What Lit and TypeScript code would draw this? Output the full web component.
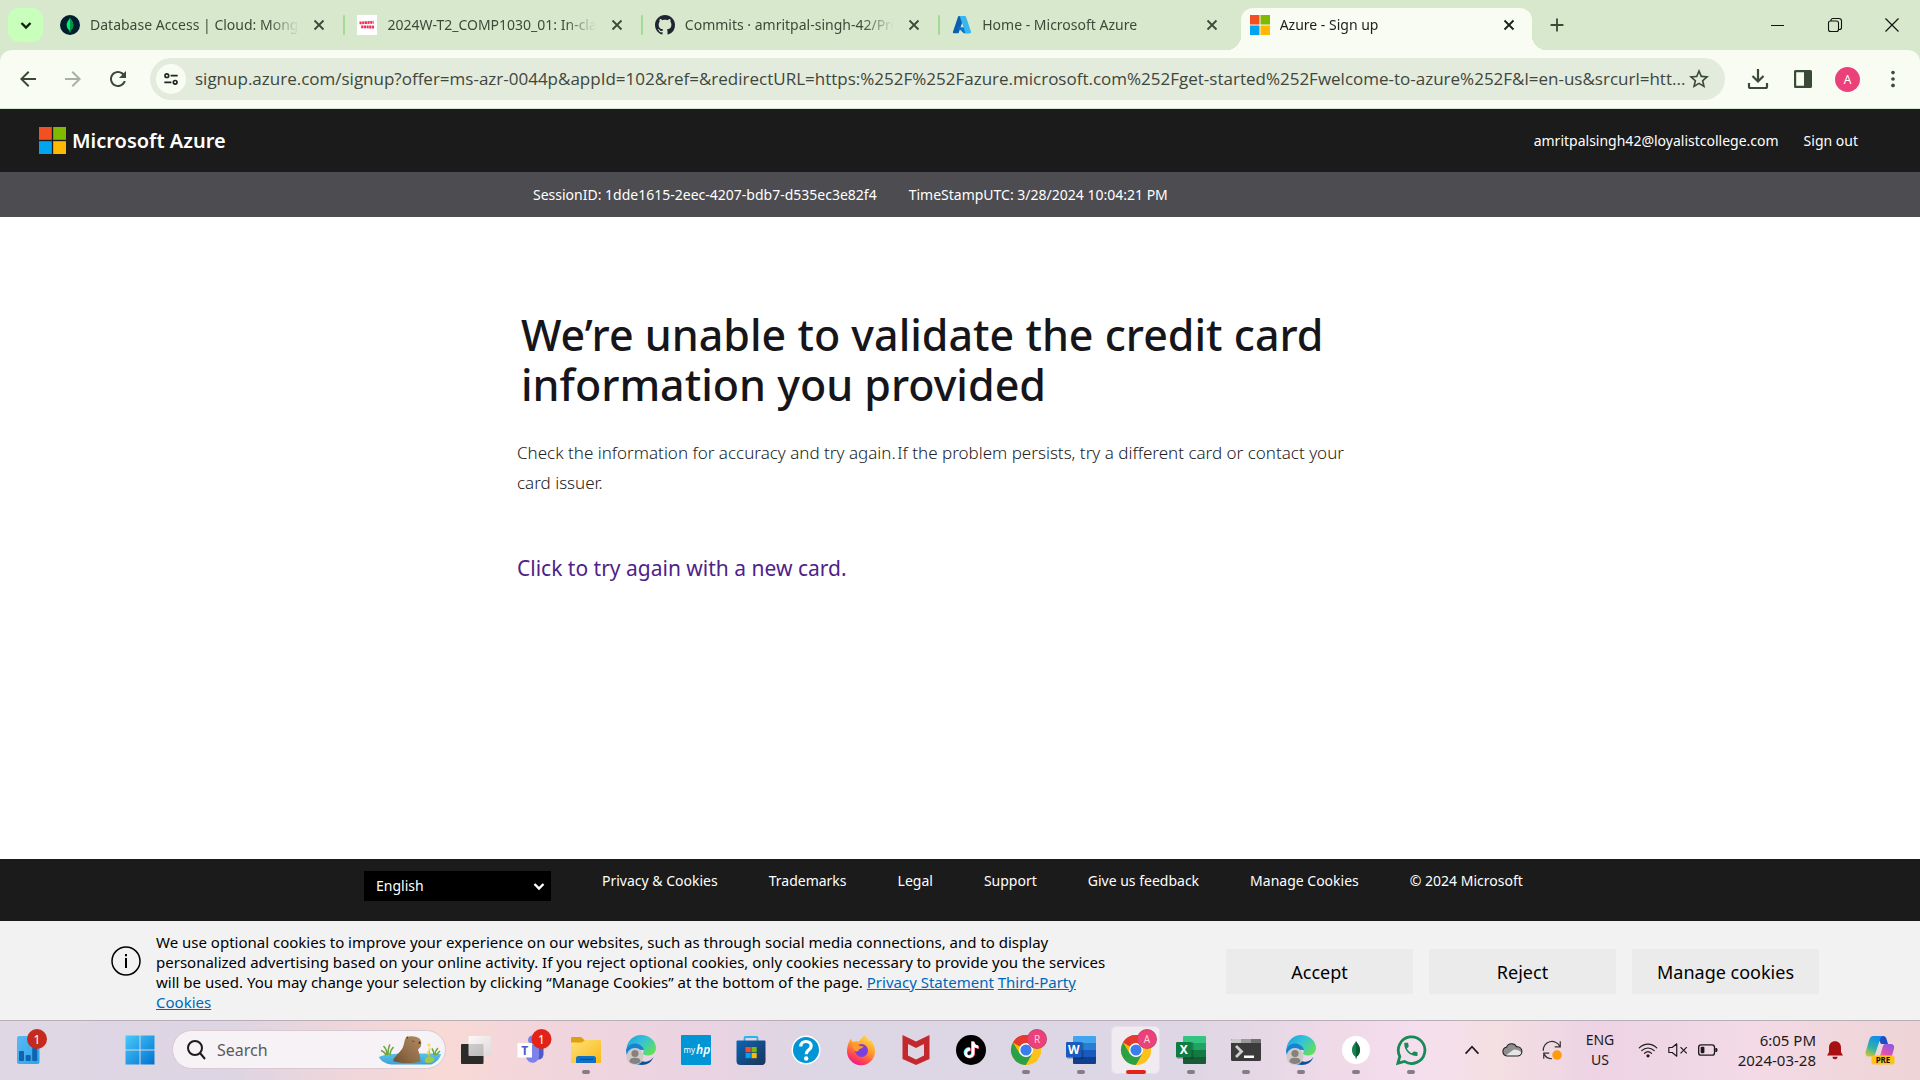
import { LitElement, html, svg, css, nothing, TemplateResult, SVGTemplateResult } from "lit";
import { customElement, property } from "lit/decorators.js";
import { classMap } from "lit/directives/class-map.js";

type Icon = SVGTemplateResult;

const base = css`
  :host {
    display: block;
    font-family: "Noto Sans", "Open Sans", sans-serif;
    font-size: 14px;
  }
  * {
    box-sizing: border-box;
  }
  svg {
    display: block;
    flex: none;
  }
  button,
  input,
  select {
    font: inherit;
    color: inherit;
    border: 0;
    margin: 0;
    padding: 0;
    background: none;
    outline: 0;
  }
  button {
    display: flex;
    align-items: center;
    justify-content: center;
    cursor: pointer;
  }
  a {
    color: inherit;
    text-decoration: none;
  }
`;

const draw = (shape: Icon, size = 24, box = "0 0 24 24", height = size) =>
  html`<svg width=${size} height=${height} viewBox=${box} fill="currentColor" aria-hidden="true">${shape}</svg>`;

/* ---------- glyphs ---------- */

const glyph = {
  back: svg`<path d="M20 11H7.83l5.59-5.59L12 4l-8 8 8 8 1.41-1.41L7.83 13H20v-2z"/>`,
  forward: svg`<path d="M12 4l-1.41 1.41L16.17 11H4v2h12.17l-5.58 5.59L12 20l8-8z"/>`,
  reload: svg`<path d="M17.65 6.35C16.2 4.9 14.21 4 12 4c-4.42 0-7.99 3.58-7.99 8s3.57 8 7.99 8c3.73 0 6.84-2.55 7.73-6h-2.08c-.82 2.33-3.04 4-5.65 4-3.31 0-6-2.69-6-6s2.69-6 6-6c1.66 0 3.14.69 4.22 1.78L13 11h7V4l-2.35 2.35z"/>`,
  star: svg`<path d="M22 9.24l-7.19-.62L12 2 9.19 8.63 2 9.24l5.46 4.73L5.82 21 12 17.27 18.18 21l-1.63-7.03L22 9.24zM12 15.4l-3.76 2.27 1-4.28-3.32-2.88 4.38-.38L12 6.1l1.71 4.04 4.38.38-3.32 2.88 1 4.28L12 15.4z"/>`,
  download: svg`<g fill="none" stroke="currentColor" stroke-width="2.200"><path d="M12 2v12M6.500 9l5.500 5.500L17.500 9"/><path d="M3 16v3.500a1.500 1.500 0 0 0 1.500 1.500h15a1.500 1.500 0 0 0 1.500-1.500V16"/></g>`,
  panel: svg`<path fill-rule="evenodd" d="M4.500 3h15A1.500 1.500 0 0 1 21 4.500v15a1.500 1.500 0 0 1-1.500 1.500h-15A1.500 1.500 0 0 1 3 19.500v-15A1.500 1.500 0 0 1 4.500 3zM5.200 5.200v13.600h7.800V5.200z"/>`,
  dots: svg`<circle cx="12" cy="5" r="2"/><circle cx="12" cy="12" r="2"/><circle cx="12" cy="19" r="2"/>`,
  tune: svg`<g fill="none" stroke="currentColor" stroke-width="2"><circle cx="7" cy="8" r="2.200"/><path d="M11.500 8H20M4 16h8.500"/><circle cx="17" cy="16" r="2.200"/></g>`,
  cross: svg`<path fill="none" stroke="currentColor" stroke-width="1.800" d="M7.500 7.500l9 9M16.500 7.500l-9 9"/>`,
  plus: svg`<path fill="none" stroke="currentColor" stroke-width="2" d="M12 5v14M5 12h14"/>`,
  caret: svg`<path fill="none" stroke="currentColor" stroke-width="2.400" d="M7.500 10l4.500 4.500L16.500 10"/>`,
  minimise: svg`<path fill="none" stroke="currentColor" stroke-width="1" d="M5 12.500h13"/>`,
  restore: svg`<g fill="none" stroke="currentColor" stroke-width="1.100"><rect x="5.500" y="8" width="10" height="10.500" rx="2"/><path d="M8 8V7.500a2 2 0 0 1 2-2h6a2.500 2.500 0 0 1 2.500 2.500v6.500a2 2 0 0 1-2 2h-1"/></g>`,
  close: svg`<path fill="none" stroke="currentColor" stroke-width="1.200" d="M5.500 5.500l13 13M18.500 5.500l-13 13"/>`,
};

const microsoft = svg`
  <path fill="#f25022" d="M0 0h11.400v11.400H0z"/><path fill="#7fba00" d="M12.600 0H24v11.400H12.600z"/>
  <path fill="#00a4ef" d="M0 12.600h11.400V24H0z"/><path fill="#ffb900" d="M12.600 12.600H24V24H12.600z"/>`;

const favicon = {
  mongo: svg`<circle cx="12" cy="12" r="12" fill="#001e2b"/><path fill="#00ed64" d="M12 3.500c.8 1.800 4 4.200 4 8.600 0 3.900-2.600 5.800-3.500 6.500L12.300 21h-.7l-.2-2.400C10.500 17.900 8 16 8 12.100c0-4.400 3.200-6.800 4-8.600z"/><path fill="#00924a" d="M12 3.500c.8 1.800 4 4.200 4 8.600 0 3.900-2.600 5.800-3.500 6.500L12 21z"/>`,
  loyalist: svg`<path fill="#fff" d="M0 0h24v24H0z"/><g fill="none" stroke="#f0315c" stroke-width="3.400"><path stroke-dasharray="2.600 .6" d="M3 9.500l17-.8"/><path stroke-dasharray="2.600 .6" d="M5 14.200l16 .3"/></g>`,
  github: svg`<path transform="scale(1.500)" fill="#1f2430" d="M8 0C3.580 0 0 3.580 0 8c0 3.540 2.290 6.530 5.470 7.590.4.070.55-.17.55-.38 0-.19-.01-.82-.01-1.490-2.010.37-2.530-.49-2.690-.94-.09-.23-.48-.94-.82-1.130-.28-.15-.68-.52-.01-.53.63-.01 1.080.58 1.230.82.72 1.210 1.870.87 2.330.66.07-.52.28-.87.51-1.070-1.780-.2-3.640-.89-3.640-3.950 0-.87.31-1.590.82-2.150-.08-.2-.36-1.020.08-2.120 0 0 .67-.21 2.200.82.64-.18 1.320-.27 2-.27.68 0 1.360.09 2 .27 1.530-1.040 2.200-.82 2.200-.82.44 1.100.16 1.920.08 2.120.51.56.82 1.270.82 2.150 0 3.070-1.870 3.750-3.650 3.950.29.25.54.73.54 1.480 0 1.070-.01 1.930-.01 2.200 0 .21.15.46.55.38A8.013 8.013 0 0016 8c0-4.420-3.580-8-8-8z"/>`,
  azure: svg`<g transform="translate(0 -.5) scale(.25)"><path fill="#0a5fb0" d="M33.340 6.540h26.040l-27.030 80.100a4.150 4.150 0 0 1-3.940 2.810H8.150a4.140 4.140 0 0 1-3.930-5.470L29.400 9.380a4.150 4.150 0 0 1 3.940-2.830z"/><path fill="#0078d4" d="M71.170 60.260H29.880a1.910 1.910 0 0 0-1.300 3.310l26.530 24.760a4.170 4.170 0 0 0 2.850 1.130h23.380z"/><path fill="#38b6f0" d="M66.600 9.360a4.140 4.140 0 0 0-3.930-2.820H33.650a4.150 4.150 0 0 1 3.930 2.820l25.180 74.620a4.150 4.150 0 0 1-3.930 5.480h29.020a4.150 4.150 0 0 0 3.930-5.480z"/></g>`,
  microsoft,
};

/* ---------- taskbar applications, each on a 30 x 30 grid ---------- */

const chrome = (letter: string) => svg`
  <circle cx="15" cy="15" r="15" fill="#fbbc05"/>
  <path fill="#e53a30" d="M15 15L2 7.500A15 15 0 0 1 28 7.500z"/>
  <path fill="#e53a30" d="M2 7.500A15 15 0 0 1 28 7.500l-13 .5z"/>
  <path fill="#2c9f47" d="M2 7.500A15 15 0 0 0 15 30l6.500-11.300L9 19z"/>
  <path fill="#fcc21b" d="M28 7.500A15 15 0 0 1 15 30l6.500-11.300V8z"/>
  <circle cx="15" cy="15" r="7" fill="#fff"/><circle cx="15" cy="15" r="5.600" fill="#3b7ded"/>
  <circle cx="26" cy="4" r="10" fill="#b5456a"/><circle cx="26" cy="4" r="9.300" fill="#ec407a"/>
  <text x="26" y="7.500" text-anchor="middle" font-size="10" fill="#fbd5e1">${letter}</text>`;

const edge = svg`
  <defs>
    <linearGradient id="edge-top" x1="0" y1="0" x2="1" y2=".7"><stop offset="0" stop-color="#1c9fe0"/><stop offset=".5" stop-color="#35c2d8"/><stop offset="1" stop-color="#62e05a"/></linearGradient>
  </defs>
  <path fill="url(#edge-top)" d="M.5 13.500C1.500 5.500 7.500 0 15 0c8.500 0 15 6 15 13 0 5-4 7.500-8 7.500-3.500 0-5.300-1.200-5-2.200 1.500-2 1.200-5-1-6.800C12 8.500 4 9 .5 13.500z"/>
  <path fill="#1583cf" d="M0 15C1.500 10 7 7.500 12 9c4 1.200 6 4 6 6.500-5-2.500-9 2-8 6.500.8 4 4 7 7 7.900C7 31 0 23.500 0 15z"/>
  <path fill="#0f4f96" d="M10 20c.5 5 6 7.500 11 6.500 3-.6 5-2.300 6.500-4.500C26 27 21 30 16 30c-4-.8-7-5-6-10z"/>
  <circle cx="9" cy="21.500" r="8.500" fill="#cfcac8"/><circle cx="9" cy="18.500" r="3.600" fill="#86807e"/><path fill="#86807e" d="M3.500 27c0-3.500 2-4.300 5.500-4.300s5.500.8 5.500 4.300a8.500 8.500 0 0 1-11 0z"/>`;

const office = (letter: string, shades: string[], tile: string) => svg`
  <path fill=${shades[0]} d="M8 1h21a1 1 0 0 1 1 1v6H7V2a1 1 0 0 1 1-1z"/>
  <path fill=${shades[1]} d="M7 8h23v7H7z"/><path fill=${shades[2]} d="M7 15h23v7H7z"/>
  <path fill=${shades[3]} d="M7 22h23v6a1 1 0 0 1-1 1H8a1 1 0 0 1-1-1z"/>
  <rect x="1" y="7" width="16.500" height="17" rx="1" fill="#000" opacity=".2"/>
  <rect y="7" width="15.500" height="15.500" rx="1.200" fill=${tile}/>
  <text x="7.700" y="19" text-anchor="middle" font-size="12" font-weight="700" fill="#fff">${letter}</text>`;

interface App {
  name: string;
  art: Icon;
  running?: boolean;
  active?: boolean;
}

const apps: App[] = [
  {
    name: "Task View",
    art: svg`<defs><linearGradient id="tv" x1="0" y1="0" x2="1" y2="1"><stop offset="0" stop-color="#fff"/><stop offset="1" stop-color="#d9d9d9"/></linearGradient></defs>
      <rect y="9" width="22.500" height="20" rx="1" fill="#2b2b29"/><rect x="7.500" y="1" width="22.500" height="20" rx="1" fill="url(#tv)" opacity=".8"/>`,
  },
  {
    name: "Microsoft Teams",
    art: svg`<circle cx="16.500" cy="5" r="4.500" fill="#7b83eb"/><path fill="#5059c9" d="M19 9h8.500v11a5 5 0 0 1-8.500 3z"/>
      <path fill="#7b83eb" d="M9 10h14v10.500a6.500 6.500 0 0 1-13 1.500z"/><rect x="1.500" y="8" width="14.500" height="14.500" rx=".6" fill="#fff"/>
      <text x="8.800" y="19.500" text-anchor="middle" font-size="12" font-weight="700" fill="#5059c9">T</text>
      <circle cx="25.500" cy="4" r="10" fill="#e2231a"/><text x="25.500" y="8.500" text-anchor="middle" font-size="12" fill="#fff">1</text>`,
  },
  {
    name: "File Explorer",
    running: true,
    art: svg`<defs><linearGradient id="fe" x1="0" y1="0" x2="1" y2="1"><stop offset="0" stop-color="#ffe07a"/><stop offset="1" stop-color="#f9b915"/></linearGradient></defs>
      <path fill="#dfa00f" d="M0 3a1 1 0 0 1 1-1h9l3.500 3H29v6H0z"/><path fill="url(#fe)" d="M0 7.500h11L14 5h15a1 1 0 0 1 1 1v21a1 1 0 0 1-1 1H1a1 1 0 0 1-1-1z"/>
      <path fill="#0f72c9" d="M5 28v-4.500A2.500 2.500 0 0 1 7.500 21h15a2.500 2.500 0 0 1 2.500 2.500V28z"/><path fill="#0a4c92" d="M9 23.800h13v1.200H9z"/>`,
  },
  { name: "Microsoft Edge", art: edge },
  {
    name: "myHP",
    art: svg`<rect width="30" height="30" rx="1" fill="#0096d6"/><text x="2.500" y="17.500" font-size="8" fill="#fff">my</text>
      <text x="15" y="19" font-size="12" font-style="italic" font-weight="600" fill="#fff">hp</text>`,
  },
  {
    name: "Microsoft Store",
    art: svg`<defs><linearGradient id="ms" x1="0" y1="0" x2="1" y2="1"><stop offset="0" stop-color="#0c64b5"/><stop offset="1" stop-color="#1c3358"/></linearGradient></defs>
      <path fill="none" stroke="#27b5f0" stroke-width="1.800" d="M8.500 7V3.200A1.200 1.200 0 0 1 9.700 2h10.600a1.200 1.200 0 0 1 1.200 1.200V7"/>
      <path fill="url(#ms)" d="M.5 6.500a1 1 0 0 1 1-1h27a1 1 0 0 1 1 1V26a4 4 0 0 1-4 4h-21a4 4 0 0 1-4-4z"/>
      <path fill="#f25022" d="M9.500 12h5.200v5.200H9.500z"/><path fill="#7fba00" d="M15.500 12h5.200v5.200h-5.200z"/><path fill="#00a4ef" d="M9.500 18h5.200v5.200H9.500z"/><path fill="#ffb900" d="M15.500 18h5.200v5.200h-5.200z"/>`,
  },
  {
    name: "Help",
    art: svg`<circle cx="15" cy="15" r="14.500" fill="#fff"/><circle cx="15" cy="15" r="13" fill="#0096d6"/>
      <path fill="none" stroke="#fff" stroke-width="3.200" d="M9.800 11.500c0-3.200 2.300-5 5.200-5s5.200 1.700 5.200 4.500c0 3.800-5 3.800-5 8.200"/><circle cx="15.200" cy="23.500" r="2.200" fill="#fff"/>`,
  },
  {
    name: "Firefox",
    art: svg`<defs><linearGradient id="ff" x1=".8" y1="0" x2=".3" y2="1"><stop offset="0" stop-color="#ffe14a"/><stop offset=".45" stop-color="#ff9a2a"/><stop offset=".75" stop-color="#ff4a4f"/><stop offset="1" stop-color="#f0128a"/></linearGradient></defs>
      <path fill="url(#ff)" d="M18 0c3 2 4 4.500 5 6 1-.2 1.500-1 1.500-1 2.500 3 4.500 6.500 4.500 11a14 14 0 0 1-28 .5C1 12 2 8 5 3.500c.3 1.800 1 2.800 2 3.500 2-.8 4-.8 5.500-.5C14.500 5 16.500 2.500 18 0z"/>
      <circle cx="15.500" cy="15.500" r="6.500" fill="#7a3fe0"/><path fill="#ff9a2a" d="M6.500 10c2.500-1.500 5.500-.5 7 .8 1.500.7 3 .3 4 .7-.6 1.800-3 2-4 2.500-1 1-1 2.300-2.500 2.500C8 16 6.500 13 6.500 10z"/>`,
  },
  {
    name: "McAfee",
    art: svg`<path fill="#c5282c" fill-rule="evenodd" d="M1.500 0L15 6.500 28.500 0v24L15 30 1.500 24zM7 9v11.500l8 4 8-4V9l-8 4z"/>`,
  },
  {
    name: "TikTok",
    art: svg`<circle cx="15" cy="15" r="15" fill="#000"/>${[
      ["#25f4ee", 6.6, 6.2],
      ["#fe2c55", 7.8, 7.2],
      ["#ffffff", 7.2, 6.7],
    ].map(
      ([c, x, y]) => svg`<path transform="translate(${x} ${y}) scale(.68)" fill=${c} d="M12.525.02c1.310-.02 2.610-.01 3.910-.02.08 1.530.63 3.090 1.750 4.170 1.120 1.110 2.700 1.620 4.240 1.790v4.030c-1.440-.05-2.890-.35-4.200-.97-.57-.26-1.100-.59-1.620-.93-.01 2.920.01 5.840-.02 8.750-.08 1.400-.54 2.790-1.350 3.940-1.310 1.920-3.580 3.170-5.910 3.210-1.430.08-2.860-.31-4.080-1.030-2.020-1.190-3.440-3.370-3.650-5.710-.02-.5-.03-1-.01-1.490.18-1.900 1.120-3.720 2.580-4.960 1.660-1.440 3.980-2.130 6.150-1.720.02 1.480-.04 2.960-.04 4.440-.99-.32-2.150-.23-3.020.37-.63.41-1.110 1.040-1.360 1.750-.21.51-.15 1.070-.14 1.610.24 1.640 1.820 3.020 3.500 2.870 1.120-.01 2.190-.66 2.770-1.610.19-.33.4-.67.41-1.060.1-1.790.06-3.570.07-5.360.01-4.030-.01-8.050.02-12.070z"/>`,
    )}`,
  },
  { name: "Chrome profile R", art: chrome("R"), running: true },
  { name: "Word", art: office("W", ["#41a5ee", "#2b7cd3", "#185abd", "#103f91"], "#185abd"), running: true },
  { name: "Chrome profile A", art: chrome("A"), running: true, active: true },
  { name: "Excel", art: office("X", ["#33c481", "#21a366", "#107c41", "#185c37"], "#107c41"), running: true },
  {
    name: "Terminal",
    running: true,
    art: svg`<rect y="4" width="30" height="22" rx="1.500" fill="#3b3b3b"/><path fill="#c9c9c9" d="M1.500 4H10v4H0V5.500A1.500 1.500 0 0 1 1.500 4z"/><path fill="#9a9a9a" d="M10 4h10v4H10z"/><path fill="#707070" d="M20 4h8.500A1.500 1.500 0 0 1 30 5.500V8H20z"/>
      <path fill="none" stroke="#cfcfcf" stroke-width="2.800" d="M5 11l5.500 5.500L5 22"/><path fill="#fff" d="M13 20.500h10V23H13z"/>`,
  },
  { name: "Microsoft Edge profile", art: edge, running: true },
  {
    name: "MongoDB Compass",
    running: true,
    art: svg`<circle cx="15" cy="15" r="14" fill="#fff"/><path fill="#10834f" d="M15 6c1 2.500 4 4.500 4 9 0 4-2.500 6-3.500 7l-.3 2h-.4l-.3-2C13.500 21 11 19 11 15c0-4.500 3-6.500 4-9z"/><path fill="#0a5c38" d="M15 6c1 2.500 4 4.500 4 9 0 4-2.500 6-3.500 7l-.3 2H15z"/>`,
  },
  {
    name: "WhatsApp",
    running: true,
    art: svg`<path fill="none" stroke="#178a55" stroke-width="2.800" d="M1.900 28.200l1.900-6.900A13.300 13.300 0 1 1 8.500 26.400z"/>
      <path transform="translate(6 5.500) scale(.74)" fill="#178a55" d="M6.620 10.790c1.440 2.830 3.760 5.140 6.590 6.590l2.200-2.200c.27-.27.67-.36 1.020-.24 1.120.37 2.330.57 3.570.57.55 0 1 .45 1 1V20c0 .55-.45 1-1 1-9.390 0-17-7.610-17-17 0-.55.45-1 1-1h3.500c.55 0 1 .45 1 1 0 1.250.2 2.450.57 3.570.11.35.03.74-.25 1.020l-2.200 2.200z"/>`,
  },
];

/* ---------- browser chrome ---------- */

const tabs = [
  { icon: favicon.mongo, title: "Database Access | Cloud: MongoDB" },
  { icon: favicon.loyalist, title: "2024W-T2_COMP1030_01: In-class" },
  { icon: favicon.github, title: "Commits · amritpal-singh-42/Project" },
  { icon: favicon.azure, title: "Home - Microsoft Azure" },
  { icon: favicon.microsoft, title: "Azure - Sign up", active: true },
];

@customElement("browser-tabs")
export class BrowserTabs extends LitElement {
  static styles = [
    base,
    css`
      .strip {
        display: flex;
        height: 50px;
        background: #d8e8cd;
        color: #3c4a38;
      }
      .search {
        width: 35px;
        height: 34px;
        margin: 8px 5px 0 8px;
        border-radius: 11px;
        background: #c8ffbb;
        color: #10200c;
      }
      .tabs {
        display: flex;
        flex: 0 1 1487px;
        min-width: 0;
      }
      .tab {
        position: relative;
        display: flex;
        align-items: center;
        flex: 1 1 0;
        min-width: 0;
        padding: 0 14px 0 12px;
      }
      .tab.ruled::after {
        content: "";
        position: absolute;
        right: 0;
        top: 15px;
        width: 2px;
        height: 20px;
        border-radius: 1px;
        background: #a3da95;
      }
      .tab.active {
        color: #1b2118;
      }
      .tab.active .shape {
        position: absolute;
        inset: 8px 3px 0;
        border-radius: 12px 12px 0 0;
        background: #f8fcf2;
      }
      .shape::before,
      .shape::after {
        content: "";
        position: absolute;
        bottom: 0;
        width: 14px;
        height: 14px;
      }
      .shape::before {
        right: 100%;
        background: radial-gradient(circle at 0 0, transparent 14px, #f8fcf2 14px);
      }
      .shape::after {
        left: 100%;
        background: radial-gradient(circle at 100% 0, transparent 14px, #f8fcf2 14px);
      }
      .label {
        position: relative;
        flex: 1;
        min-width: 0;
        justify-content: flex-start;
        gap: 10px;
      }
      .title {
        flex: 0 1 209px;
        min-width: 0;
        overflow: hidden;
        white-space: nowrap;
        text-align: left;
        line-height: 20px;
        mask-image: linear-gradient(90deg, #000 85%, transparent);
      }
      .shut {
        position: relative;
        width: 24px;
        height: 24px;
      }
      .new {
        width: 44px;
      }
      .window {
        display: flex;
        margin-left: auto;
        color: #10130f;
      }
      .window button {
        width: 57px;
      }
    `,
  ];
  render() {
    return html`<div class="strip">
      <button class="search" aria-label="Search tabs">${draw(glyph.caret)}</button>
      <div class="tabs">
        ${tabs.map(
          (t, i) => html`<div class=${classMap({ tab: true, active: !!t.active, ruled: i < 3 })}>
            ${t.active ? html`<span class="shape"></span>` : nothing}
            <button class="label">${draw(t.icon, 20)}<span class="title">${t.title}</span></button>
            <button class="shut" aria-label="Close tab">${draw(glyph.cross)}</button>
          </div>`,
        )}
      </div>
      <button class="new" aria-label="New tab">${draw(glyph.plus, 22)}</button>
      <div class="window">
        <button aria-label="Minimise">${draw(glyph.minimise)}</button>
        <button aria-label="Restore">${draw(glyph.restore)}</button>
        <button aria-label="Close window">${draw(glyph.close)}</button>
      </div>
    </div>`;
  }
}

const address =
  "signup.azure.com/signup?offer=ms-azr-0044p&appId=102&ref=&redirectURL=https:%252F%252Fazure.microsoft.com%252Fget-started%252Fwelcome-to-azure%252F&l=en-us&srcurl=htt...";

@customElement("browser-toolbar")
export class BrowserToolbar extends LitElement {
  static styles = [
    base,
    css`
      :host {
        background: #d8e8cd;
      }
      .bar {
        display: flex;
        align-items: center;
        height: 59px;
        padding: 0 5px;
        border-bottom: 1px solid #d5e5d0;
        border-radius: 12px 12px 0 0;
        background: #f8fcf2;
        color: #3a4a36;
      }
      .bar > button {
        width: 45px;
        height: 40px;
      }
      .bar > .off {
        color: #a9b0a4;
      }
      .box {
        display: flex;
        align-items: center;
        flex: 1;
        min-width: 0;
        height: 42px;
        margin: 0 10px;
        padding: 0 14px 0 6px;
        border-radius: 21px;
        background: #e3ebdc;
      }
      .site {
        width: 30px;
        height: 30px;
        border-radius: 15px;
        background: #f8fcf2;
        color: #1f261c;
      }
      .box input {
        flex: 1;
        min-width: 0;
        margin-left: 9px;
        font-family: "Open Sans", sans-serif;
        font-size: 17px;
        line-height: 24px;
        color: #3f463d;
      }
      .avatar {
        display: grid;
        place-items: center;
        width: 25px;
        height: 25px;
        border-radius: 50%;
        background: #ec407a;
        color: #fff;
        font-size: 12px;
      }
    `,
  ];
  render() {
    return html`<div class="bar">
      <button aria-label="Back">${draw(glyph.back)}</button>
      <button class="off" aria-label="Forward">${draw(glyph.forward)}</button>
      <button aria-label="Reload">${draw(glyph.reload)}</button>
      <div class="box">
        <button class="site" aria-label="Site information">${draw(glyph.tune, 20)}</button>
        <input type="text" aria-label="Address" .value=${address} />
        <button aria-label="Bookmark this page">${draw(glyph.star)}</button>
      </div>
      <button aria-label="Downloads">${draw(glyph.download)}</button>
      <button aria-label="Side panel">${draw(glyph.panel)}</button>
      <button aria-label="Profile"><span class="avatar">A</span></button>
      <button aria-label="Menu">${draw(glyph.dots, 22)}</button>
    </div>`;
  }
}

/* ---------- page ---------- */

@customElement("azure-page")
export class AzurePage extends LitElement {
  static styles = [
    base,
    css`
      :host {
        display: flex;
        flex-direction: column;
        background: #fff;
      }
      header {
        display: flex;
        align-items: center;
        justify-content: space-between;
        height: 63px;
        padding: 0 62px 0 39px;
        background: #1b1b1b;
        color: #fff;
      }
      .brand {
        display: flex;
        align-items: center;
        gap: 6px;
        font-size: 20px;
        font-weight: 600;
        line-height: 26px;
      }
      .account {
        display: flex;
        gap: 25px;
        line-height: 20px;
      }
      .session {
        background: #4d4c51;
        color: #fff;
      }
      .column {
        width: 100%;
        max-width: 886px;
        margin: 0 auto;
      }
      .session .column {
        display: flex;
        align-items: center;
        gap: 32px;
        height: 45px;
        padding-left: 16px;
      }
      main {
        flex: 1;
        padding: 93px 0 60px;
      }
      h1 {
        margin: 0 0 28px;
        padding-left: 4px;
        font-size: 43px;
        font-weight: 500;
        line-height: 50px;
        color: #16161a;
      }
      .advice {
        margin: 0;
        max-width: 850px;
        font-size: 17px;
        font-weight: 300;
        line-height: 30px;
        color: #222;
      }
      .retry {
        display: inline-block;
        margin-top: 54px;
        font-size: 21px;
        line-height: 32px;
        color: #4f2289;
      }
      footer {
        background: #1b1b1b;
        color: #fff;
      }
      .links {
        display: flex;
        gap: 51px;
        max-width: 1192px;
        height: 62px;
        margin: 0 auto;
        padding-top: 12px;
        line-height: 20px;
      }
      .language {
        display: grid;
        align-items: center;
        width: 187px;
        height: 30px;
        background: #000;
      }
      .language > * {
        grid-area: 1 / 1;
      }
      .language select {
        appearance: none;
        width: 100%;
        height: 30px;
        padding: 0 30px 0 12px;
      }
      .language option {
        background: #000;
      }
      .language svg {
        justify-self: end;
        pointer-events: none;
      }
      .cookies {
        display: flex;
        align-items: center;
        gap: 15px;
        min-height: 99px;
        padding: 10px 101px 8px 111px;
        background: #f2f2f2;
        color: #000;
      }
      .info {
        align-self: flex-start;
        margin-top: 15px;
      }
      .notice {
        flex: 0 1 966px;
        margin: 0;
        font-size: 15px;
        line-height: 20px;
      }
      .notice a {
        color: #0067b8;
        text-decoration: underline;
      }
      .choices {
        display: flex;
        gap: 16px;
        margin-left: auto;
      }
      .choices button {
        width: 187px;
        height: 45px;
        background: #ebebeb;
        font-size: 18px;
        white-space: nowrap;
      }
    `,
  ];
  render() {
    const links = ["Privacy & Cookies", "Trademarks", "Legal", "Support", "Give us feedback", "Manage Cookies"];
    return html`
      <header>
        <a class="brand" href="#">${draw(microsoft, 27)}<span>Microsoft Azure</span></a>
        <nav class="account"><a href="#">amritpalsingh42@loyalistcollege.com</a><a href="#">Sign out</a></nav>
      </header>
      <div class="session">
        <div class="column">
          <span>SessionID: 1dde1615-2eec-4207-bdb7-d535ec3e82f4</span>
          <span>TimeStampUTC: 3/28/2024 10:04:21 PM</span>
        </div>
      </div>
      <main>
        <div class="column">
          <h1>We’re unable to validate the credit card information you provided</h1>
          <p class="advice">
            Check the information for accuracy and try again.&#8202;If the problem persists, try a different card or contact your card issuer.
          </p>
          <a class="retry" href="#">Click to try again with a new card.</a>
        </div>
      </main>
      <footer>
        <div class="links">
          <div class="language">
            <select aria-label="Language"><option>English</option></select>
            ${draw(glyph.caret, 24)}
          </div>
          ${links.map((l) => html`<a href="#">${l}</a>`)}
          <span>© 2024 Microsoft</span>
        </div>
      </footer>
      <section class="cookies" aria-label="Cookie notice">
        <svg class="info" width="30" height="30" viewBox="0 0 30 30" aria-hidden="true">
          <circle cx="15" cy="15" r="14" fill="none" stroke="#000" stroke-width="1.500" />
          <path d="M14 12h2v10h-2zM14 8h2v2.200h-2z" />
        </svg>
        <p class="notice">
          We use optional cookies to improve your experience on our websites, such as through social media connections, and to display
          personalized advertising based on your online activity. If you reject optional cookies, only cookies necessary to provide you
          the services will be used. You may change your selection by clicking “Manage Cookies” at the bottom of the page.
          <a href="#">Privacy Statement</a> <a href="#">Third-Party Cookies</a>
        </p>
        <div class="choices">
          <button>Accept</button><button>Reject</button><button>Manage cookies</button>
        </div>
      </section>
    `;
  }
}

/* ---------- taskbar ---------- */

const widget = svg`<defs><linearGradient id="wg" x1="0" y1="0" x2="1" y2="1"><stop offset="0" stop-color="#5bb8f2"/><stop offset="1" stop-color="#2aa5ea"/></linearGradient></defs>
  <rect y="7" width="22.500" height="28" rx="2" fill="url(#wg)"/><g fill="#0f63b0"><rect x="2" y="22" width="5" height="10" rx="1"/><rect x="8.700" y="26" width="5" height="6" rx="1"/><rect x="15.200" y="18" width="5" height="14" rx="1"/></g>
  <circle cx="20" cy="10" r="10" fill="#c42b1c"/><text x="20" y="14.500" text-anchor="middle" font-size="12" fill="#fff">1</text>`;

const start = svg`<defs><linearGradient id="st" gradientUnits="userSpaceOnUse" x1="0" y1="0" x2="30" y2="30"><stop offset="0" stop-color="#48ccfb"/><stop offset="1" stop-color="#0070d0"/></linearGradient></defs>
  <path fill="url(#st)" d="M.5.5h14v14H.5zM15.500.5h14v14h-14zM.5 15.500h14v14H.5zM15.500 15.500h14v14h-14z"/>`;

const capybara = svg`<defs>
    <linearGradient id="fur" x1="1" y1="0" x2="0" y2="1"><stop offset="0" stop-color="#b08a63"/><stop offset=".6" stop-color="#8f6a45"/><stop offset="1" stop-color="#6f4d30"/></linearGradient>
    <linearGradient id="pond" x1="0" y1="0" x2="0" y2="1"><stop offset="0" stop-color="#58c4e6"/><stop offset="1" stop-color="#3aa0d8"/></linearGradient>
  </defs>
  <path fill="url(#pond)" d="M0 22c4-2.500 14-3.500 26-3.500s30-.5 36 .5c-1 5-5 8.500-10 10.500H12C6 28.500 1 25.500 0 22z"/>
  <g fill="none" stroke="#6da53a" stroke-width="1.500"><path d="M8 20c0-4-1.500-7-3.500-9M9 20c0-5 .5-8 2-10.500M11 20c0-4 1.500-6 3.500-8M7 20c-1-2-3-4-5-4.500"/><path d="M55 20c0-3-1-5-2-6.500M56 20c0-3 1-5 3-7M57 20l4-4"/></g>
  <path fill="url(#fur)" d="M14 26c1-4.500 6-7.500 9-12 2.500-4 2-8.500 4-11.500.8-1.500 2-1.500 2.800-.8C33 .8 37 1.300 40.500 3.500c2 2 2.200 6 1 8.500-.8 1.300-2 1.700-2.500 2.500 1.200 3.500 2.500 8 2.500 12-8 2-19.500 2.300-27.500-.5z"/>
  <path fill="#4d3220" d="M33.500 5.500l2 .8-1.800.6zM40 6.500l1.800.5-.8 2-1.600-.5zM27.500 2.500l1.600-.6-.3 2.100z"/>
  <path fill="#a3c74a" d="M46 27c-1-3 1-5 3-5 0-3 .5-6 1-9 1 3 1.500 6 1.500 9 2-1 4 1 4 3-1 3-7 4-9.500 2z"/><circle cx="50" cy="10" r="1.500" fill="#f6d85a"/><circle cx="51" cy="14" r="1.400" fill="#f6e28a"/><circle cx="49" cy="18" r="1.400" fill="#f6d85a"/>`;

const tray = {
  up: svg`<path fill="none" stroke="currentColor" stroke-width="1.800" d="M5 16l7-7.500 7 7.500"/>`,
  cloud: svg`<path fill="#8e8e8e" d="M6.500 18.500A4.800 4.800 0 0 1 6 9a6 6 0 0 1 11-.5 5 5 0 0 1 1.500 10z"/><path fill="#e6e6e6" d="M4.500 18.500L14 11.500c3 .3 6 .5 8 3a4 4 0 0 1-3.500 4z"/><path fill="none" stroke="#222" stroke-width="1.200" d="M6.500 18.500A4.800 4.800 0 0 1 6 9a6 6 0 0 1 11-.5 5 5 0 0 1 1.500 10z"/>`,
  sync: svg`<g fill="none" stroke="#333" stroke-width="1.300"><path d="M2.500 13A9.500 9.500 0 0 1 20.500 8M21 2.500V8.500h-6"/><path d="M12 21.500a9 9 0 0 1-8.500-5M3 21.500v-6h6"/></g><circle cx="17.500" cy="17.500" r="5.200" fill="#ff9a0a"/>`,
  wifi: svg`<g fill="none" stroke="currentColor" stroke-width="1.400" stroke-linecap="round"><path d="M1.500 9.500c6-6 15-6 21 0M4.500 12.800c4.500-4.300 10.500-4.300 15 0M7.700 16c2.500-2.500 6-2.500 8.600 0"/></g><circle cx="12" cy="19" r="1.900"/>`,
  mute: svg`<g fill="none" stroke="currentColor" stroke-width="1.400" stroke-linejoin="round"><path d="M1 9v6h4l5.500 4.500v-15L5 9z"/><path d="M15 8.500l7.500 7.500M22.500 8.500L15 16"/></g>`,
  battery: svg`<rect x=".8" y="5.800" width="19" height="12.400" rx="3" fill="none" stroke="currentColor" stroke-width="1.600"/><rect x="3.200" y="8.200" width="4.500" height="7.600" rx="1"/><path d="M20.800 9.500h1a1.500 1.500 0 0 1 1.500 1.500v2a1.500 1.500 0 0 1-1.500 1.500h-1z"/>`,
  bell: svg`<path fill="#a80f12" d="M12 1.500c4.400 0 7.200 3.200 7.200 7.500v5.500l2.300 4H2.500l2.300-4V9c0-4.300 2.800-7.500 7.200-7.500zM9 20h6a3 3 0 0 1-6 0z"/>`,
  copilot: svg`<defs>
      <linearGradient id="cpa" x1=".4" y1="0" x2="0" y2="1"><stop offset="0" stop-color="#1590e8"/><stop offset=".5" stop-color="#2fb2a8"/><stop offset="1" stop-color="#e6c81e"/></linearGradient>
      <linearGradient id="cpb" x1=".8" y1="0" x2=".2" y2="1"><stop offset="0" stop-color="#8a5be8"/><stop offset=".6" stop-color="#e050b0"/><stop offset="1" stop-color="#f8906a"/></linearGradient>
    </defs>
    <path fill="#1a4fc4" d="M12 1h6c2 0 3 1 3.500 3L23 9h-7z"/><path fill="url(#cpa)" d="M8.500 1H18c-2 .5-2.600 2-3.200 4L10 19.500c-.5 1.500-1.500 2-3 2H4C1 21.500 0 19.500.8 16.500L4.500 4C5.200 2 6.500 1 8.500 1z"/>
    <path fill="url(#cpb)" d="M20 9h5.500c3 0 4.200 2 3.400 5l-2 7c-.6 2-2 3-4 3H12c2-.5 2.600-1.500 3.200-3.500L18 11c.4-1.300 1-2 2-2z"/>
    <rect x="6.500" y="20.500" width="23" height="9" rx="2" fill="#fcc419"/><text x="18" y="28" text-anchor="middle" font-size="8" font-weight="700" fill="#111">PRE</text>`,
};

@customElement("task-bar")
export class TaskBar extends LitElement {
  @property({ attribute: false }) apps: App[] = apps;
  static styles = [
    base,
    css`
      .bar {
        display: flex;
        align-items: center;
        height: 60px;
        padding: 0 14px 2px 17px;
        border-top: 1px solid #b9aeb6;
        background: linear-gradient(
          90deg,
          #e0d7e5 0%,
          #ddd5e3 12%,
          #efd6da 18%,
          #f8d9d5 23%,
          #f1d5dd 29%,
          #e9d3e2 37%,
          #ddd6e4 42%,
          #ded6e4 62%,
          #f0dae8 70%,
          #f5dfee 74%,
          #f4dfe3 78%,
          #edd3e4 83%,
          #f3dae6 91%,
          #eed4d5 100%
        );
        color: #1c1a1c;
      }
      svg {
        overflow: visible;
      }
      .widgets {
        margin-right: 72px;
      }
      .start {
        margin-right: 17px;
      }
      .find {
        display: flex;
        align-items: center;
        flex: 0 1 274px;
        min-width: 0;
        height: 39px;
        padding: 0 4px 0 12px;
        border: 1px solid #d8c9d2;
        border-radius: 20px;
        background: #f7f2f6;
        color: #1c1a1c;
      }
      .find input {
        flex: 1;
        min-width: 0;
        margin-left: 10px;
        font-size: 16px;
        line-height: 24px;
      }
      .find input::placeholder {
        color: #5c585c;
        opacity: 1;
      }
      .apps {
        display: flex;
        margin-left: 2px;
      }
      .app {
        position: relative;
        width: 55px;
        height: 48px;
      }
      .app.active::before {
        content: "";
        position: absolute;
        inset: 0 3px;
        border-radius: 5px;
        background: #f0ebf1;
        border: 1px solid #e6dfe8;
      }
      .app svg {
        position: relative;
      }
      .app.running::after {
        content: "";
        position: absolute;
        bottom: 0;
        left: 24px;
        width: 8px;
        height: 4px;
        border-radius: 2px;
        background: #857d86;
      }
      .app.active::after {
        left: 18px;
        width: 20px;
        background: #e1251b;
      }
      .tray {
        display: flex;
        align-items: center;
        margin-left: auto;
      }
      .tray button {
        width: 40px;
        height: 48px;
      }
      .tray .lang {
        width: 56px;
        line-height: 20px;
      }
      .tray .status {
        width: 100px;
        gap: 10px;
      }
      .tray .clock {
        width: 88px;
        justify-content: flex-end;
        text-align: right;
        font-size: 15px;
        line-height: 20px;
      }
      .tray .bell {
        width: 38px;
      }
      .tray .copilot {
        width: 52px;
      }
    `,
  ];
  render(): TemplateResult {
    return html`<div class="bar">
      <button class="widgets" aria-label="Widgets">${draw(widget, 36, "0 0 36 42", 42)}</button>
      <button class="start" aria-label="Start">${draw(start, 30, "0 0 30 30")}</button>
      <label class="find">
        <svg width="22" height="22" viewBox="0 0 22 22" fill="none" stroke="currentColor" stroke-width="2" aria-hidden="true">
          <circle cx="10" cy="9" r="7" />
          <path d="M15 14l5 6" />
        </svg>
        <input type="search" placeholder="Search" aria-label="Search" />
        ${draw(capybara, 62, "0 0 62 30", 30)}
      </label>
      <div class="apps">
        ${this.apps.map(
          (a) => html`<button
            class=${classMap({ app: true, running: !!a.running, active: !!a.active })}
            aria-label=${a.name}
          >
            ${draw(a.art, 30, "0 0 30 30")}
          </button>`,
        )}
      </div>
      <div class="tray">
        <button aria-label="Show hidden icons">${draw(tray.up, 22)}</button>
        <button aria-label="OneDrive">${draw(tray.cloud, 22)}</button>
        <button aria-label="Updates">${draw(tray.sync, 22)}</button>
        <button class="lang">ENG<br />US</button>
        <button class="status" aria-label="Network, sound and battery">
          ${draw(tray.wifi, 20)}${draw(tray.mute, 20)}${draw(tray.battery, 20)}
        </button>
        <button class="clock">6:05 PM<br />2024-03-28</button>
        <button class="bell" aria-label="Notifications">${draw(tray.bell, 20)}</button>
        <button class="copilot" aria-label="Copilot">${draw(tray.copilot, 30, "0 0 30 30")}</button>
      </div>
    </div>`;
  }
}

@customElement("app-root")
export class AppRoot extends LitElement {
  static styles = css`
    :host {
      display: flex;
      flex-direction: column;
      min-height: 100vh;
    }
    azure-page {
      flex: 1;
    }
  `;
  render() {
    return html`<browser-tabs></browser-tabs><browser-toolbar></browser-toolbar><azure-page></azure-page><task-bar></task-bar>`;
  }
}
